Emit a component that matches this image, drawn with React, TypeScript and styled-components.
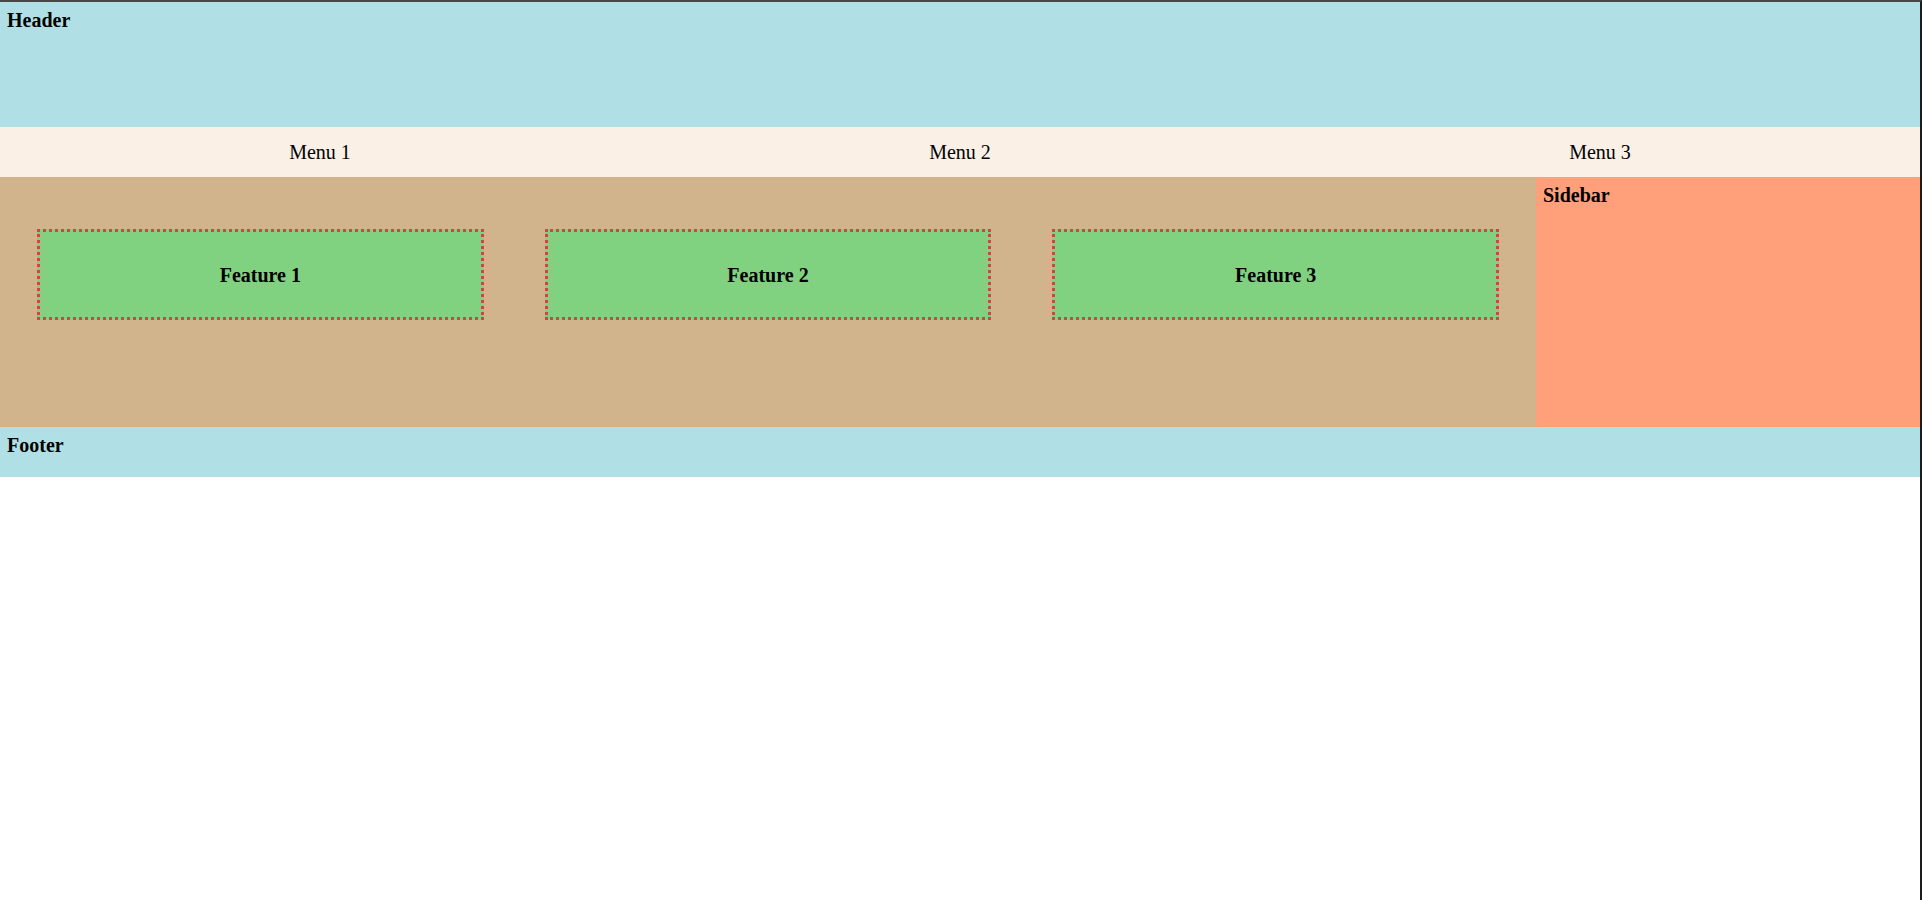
import React from "react";
import styled, { createGlobalStyle } from "styled-components";

const GlobalStyle = createGlobalStyle`
  html, body {
    margin: 0;
    padding: 0;
  }
  body {
    background: #1c1c1c;
    font-family: "Liberation Serif", "Times New Roman", serif;
    color: #000;
  }
  * { box-sizing: border-box; }
`;

const Frame = styled.div`
  border-top: 2px solid #474747;
  border-right: 2px solid #1c1c1c;
  background: #ffffff;
  min-height: 900px;
`;

const Layout = styled.div`
  display: grid;
  grid-template-columns: 1536px 384px;
  grid-template-rows: 125px 50px 250px 50px;
  grid-template-areas:
    "header header"
    "menu menu"
    "main sidebar"
    "footer footer";
`;

const Section = styled.div<{ $bg: string }>`
  background: ${(p) => p.$bg};
  padding: 7px 6px 6px 7px;
  font-size: 20px;
  font-weight: bold;
`;

const Header = styled(Section)`
  grid-area: header;
`;

const Sidebar = styled(Section)`
  grid-area: sidebar;
`;

const Footer = styled(Section)`
  grid-area: footer;
`;

const Menu = styled.nav`
  grid-area: menu;
  background: #faf0e6;
  display: grid;
  grid-template-columns: repeat(3, 1fr);
  align-items: center;
`;

const MenuItem = styled.div`
  text-align: center;
  font-size: 20px;
`;

const Main = styled.main`
  grid-area: main;
  background: #d2b48c;
  padding: 52px 37px 0;
  display: flex;
  align-items: flex-start;
  gap: 61px;
`;

const Feature = styled.div`
  flex: 1;
  height: 91px;
  padding-top: 2px;
  background: #80d280;
  border: 3px dotted #c84848;
  display: flex;
  align-items: center;
  justify-content: center;
  font-size: 20px;
  font-weight: bold;
`;

const menus = ["Menu 1", "Menu 2", "Menu 3"];
const features = ["Feature 1", "Feature 2", "Feature 3"];

export default function App() {
  return (
    <>
      <GlobalStyle />
      <Frame>
        <Layout>
          <Header as="header" $bg="#b0e0e6">Header</Header>
          <Menu>
            {menus.map((m) => (
              <MenuItem key={m}>{m}</MenuItem>
            ))}
          </Menu>
          <Main>
            {features.map((f) => (
              <Feature key={f}>{f}</Feature>
            ))}
          </Main>
          <Sidebar as="aside" $bg="#ffa07a">Sidebar</Sidebar>
          <Footer as="footer" $bg="#b0e0e6">Footer</Footer>
        </Layout>
      </Frame>
    </>
  );
}
